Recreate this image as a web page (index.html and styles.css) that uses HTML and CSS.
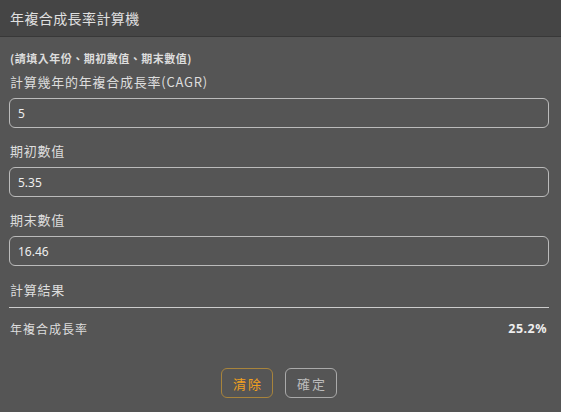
FILE: index.html
```html
<!DOCTYPE html>
<html lang="zh-Hant">
<head>
  <meta charset="UTF-8">
  <meta name="viewport" content="width=device-width, initial-scale=1.0">
  <title>年複合成長率計算機</title>
  <link rel="stylesheet" href="styles.css">
</head>
<body>
  <header class="header">
    <h1>年複合成長率計算機</h1>
  </header>

  <main class="calc">
    <p class="hint">(請填入年份、期初數值、期末數值)</p>

    <div class="field">
      <label for="years">計算幾年的年複合成長率(CAGR)</label>
      <input id="years" class="input" type="text" value="5">
    </div>
    <div class="field">
      <label for="start">期初數值</label>
      <input id="start" class="input" type="text" value="5.35">
    </div>
    <div class="field">
      <label for="end">期末數值</label>
      <input id="end" class="input" type="text" value="16.46">
    </div>

    <div class="result">
      <div class="result-title">計算結果</div>
      <div class="result-row">
        <span>年複合成長率</span>
        <span class="result-value">25.2%</span>
      </div>
    </div>

    <div class="actions">
      <button class="btn btn-clear">清除</button>
      <button class="btn btn-ok">確定</button>
    </div>
  </main>
</body>
</html>
```

FILE: styles.css
```css
body {
  margin: 0;
  padding: 0;
  background-color: #555555;
  color: #dddddd;
  font-family: "Noto Sans CJK TC", "Noto Sans", sans-serif;
}

.header {
  height: 36px;
  display: flex;
  align-items: center;
  padding: 0 10px;
  background-color: #454545;
  border-bottom: 1px solid #383838;
}
.header > h1 {
  margin: 0;
  font-size: 14px;
  font-weight: normal;
  letter-spacing: 0.4px;
  color: #e0e0e0;
}

.calc {
  padding: 0 12px 0 9px;
}

.hint {
  margin: 13px 0 0 1px;
  font-size: 11px;
  line-height: 16px;
  font-weight: bold;
  letter-spacing: 0.5px;
}

.field {
  display: flex;
  flex-direction: column;
  margin-top: 7px;
}
.field + .field {
  margin-top: 14px;
}
.field label {
  font-size: 13px;
  line-height: 18px;
  letter-spacing: 0.75px;
  margin: 0 0 7px 1px;
}

.input {
  height: 30px;
  box-sizing: border-box;
  padding: 0 8px;
  background-color: #555555;
  border: 1px solid #bbbbbb;
  border-radius: 6px;
  color: #eeeeee;
  font-family: "Noto Sans", "Noto Sans CJK TC", sans-serif;
  font-size: 12px;
  outline: none;
}

.result {
  margin-top: 15px;
}
.result-title {
  font-size: 13px;
  line-height: 18px;
  letter-spacing: 0.75px;
  padding: 0 0 8px 1px;
  border-bottom: 1px solid #cccccc;
}
.result-row {
  display: flex;
  justify-content: space-between;
  align-items: center;
  margin-top: 12px;
  padding: 0 2px 0 1px;
  font-size: 12px;
  line-height: 18px;
  letter-spacing: 1px;
}
.result-value {
  font-family: "Noto Sans", sans-serif;
  font-weight: bold;
  font-size: 12.5px;
  letter-spacing: 0.5px;
  color: #eeeeee;
}

.actions {
  display: flex;
  justify-content: center;
  gap: 12px;
  margin-top: 30px;
}

.btn {
  width: 52px;
  height: 30px;
  box-sizing: border-box;
  background-color: transparent;
  border-radius: 6px;
  font-family: "Noto Sans CJK TC", sans-serif;
  font-size: 13px;
  letter-spacing: 2px;
  padding: 0 0 0 2px;
  cursor: pointer;
}
.btn-clear {
  color: #f0a020;
  border: 1px solid #a8843c;
}
.btn-ok {
  color: #bbbbbb;
  border: 1px solid #aaaaaa;
}
```
